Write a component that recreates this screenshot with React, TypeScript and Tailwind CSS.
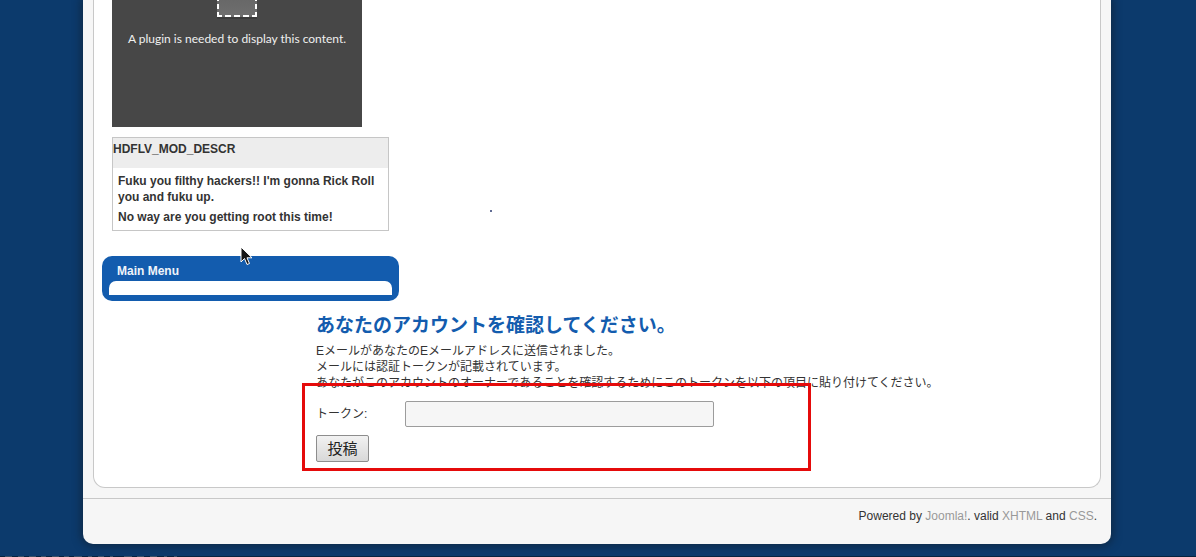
function PluginPlaceholder() {
  return (
    <div className="flex h-[127px] w-[250px] flex-col items-center overflow-hidden bg-[#474747]">
      <svg width="44" height="22" viewBox="0 0 44 22" aria-hidden="true">
        <defs>
          <linearGradient id="plug" x1="0" y1="0" x2="0" y2="1">
            <stop offset="0" stopColor="#686868" />
            <stop offset="1" stopColor="#6f6f6f" />
          </linearGradient>
        </defs>
        <rect x="2" y="0" width="40" height="19" fill="#3c3c3c" />
        <rect x="2" y="0" width="40" height="17" fill="url(#plug)" />
        <path
          d="M3 0V1M3 4V9M3 12V17M41 0V1M41 4V9M41 12V17M2 16H7M10 16H16M19 16H25M28 16H34M37 16H42"
          stroke="#fff"
          strokeWidth="2"
        />
      </svg>
      <p className="mt-2 font-['Lato',sans-serif] text-[12px] leading-[18px] text-[#f0f0f0]">
        A plugin is needed to display this content.
      </p>
    </div>
  );
}

function VideoDescription() {
  return (
    <section className="mt-[10px] w-[277px] border border-[#c6c6c6] pb-[5px] font-bold">
      <h3 className="h-[30px] bg-[#ededed] pt-[3px] leading-4">HDFLV_MOD_DESCR</h3>
      <p className="mt-[5px] px-[5px] leading-4">
        Fuku you filthy hackers!! I'm gonna Rick Roll you and fuku up.
      </p>
      <p className="mt-1 px-[5px] leading-4">No way are you getting root this time!</p>
    </section>
  );
}

function MainMenu() {
  return (
    <nav className="relative mt-[25px] w-[297px] rounded-[10px] bg-[#135cae] px-[7px] pt-[7px] pb-[6px]">
      <h3 className="px-2 leading-4 font-bold text-[#f0f4fa]">Main Menu</h3>
      <div className="mt-[2px] h-[14px] rounded-t-[7px] bg-white" />
      <svg
        className="absolute top-[-10px] left-[138px]"
        width="13"
        height="20"
        viewBox="0 0 13 20"
        aria-hidden="true"
      >
        <path d="M1 1V16L4.5 12.5L7 18.5L9.5 17.5L7 11.8H12Z" fill="#161616" stroke="#fff" />
      </svg>
    </nav>
  );
}

function ConfirmForm() {
  return (
    <form className="relative mt-[10px] w-full max-w-[398px]" onSubmit={(e) => e.preventDefault()}>
      <div className="flex items-center">
        <label htmlFor="token" className="w-[89px] shrink-0">
          トークン:
        </label>
        <input
          id="token"
          type="text"
          className="h-[26px] min-w-0 flex-1 rounded-[2px] border border-[#9c9c9c] bg-[#f6f6f6] px-1"
        />
      </div>
      <button
        type="submit"
        className="mt-2 block h-[27px] w-[53px] rounded-[2px] border border-[#8d8d8d] bg-linear-to-b from-[#f2f2f2] to-[#d8d8d8] text-[15px] leading-[25px] text-[#222]"
      >
        投稿
      </button>
      <div className="pointer-events-none absolute -top-[18px] -right-[97px] -bottom-[9px] -left-[14px] border-[3px] border-[#e50b0b]" />
    </form>
  );
}

export default function App() {
  return (
    <div className="bg-[#0c3a6c] pr-[85px] pl-[83px] font-['Liberation_Sans','Noto_Sans_CJK_JP',sans-serif] text-[12px] leading-4 text-[#333]">
      <div className="rounded-b-[10px] bg-[#f6f6f6] shadow-[0_0_8px_2px_rgba(16,34,52,0.7)]">
        <div className="px-[10px]">
          <main className="relative rounded-b-[12px] border border-t-0 border-[#c8c8c8] bg-white px-2 pb-[25px]">
            <div className="pl-[10px]">
              <PluginPlaceholder />
              <VideoDescription />
            </div>
            <MainMenu />
            <article className="mt-[13px] pl-[214px]">
              <h2 className="text-[19px] leading-6 font-bold text-[#135cae]">
                あなたのアカウントを確認してください。
              </h2>
              <p className="mt-[5px]">
                EメールがあなたのEメールアドレスに送信されました。
                <br />
                メールには認証トークンが記載されています。
                <br />
                あなたがこのアカウントのオーナーであることを確認するためにこのトークンを以下の項目に貼り付けてください。
              </p>
              <ConfirmForm />
            </article>
            <span className="absolute top-[210px] left-[396px] size-[2px] rounded-full bg-[#2d3b70]" />
          </main>
        </div>
        <footer className="mt-[10px] h-[46px] border-t border-[#c8c8c8] pt-[9px] pr-[14px] text-right">
          Powered by{" "}
          <a href="#joomla" className="text-[#999]">
            Joomla!
          </a>
          . valid{" "}
          <a href="#xhtml" className="text-[#999]">
            XHTML
          </a>{" "}
          and{" "}
          <a href="#css" className="text-[#999]">
            CSS
          </a>
          .
        </footer>
      </div>
      <div className="-mr-[85px] -ml-[83px] pt-3">
        <div className="h-px bg-[#06233f]">
          <svg width="180" height="1" className="block" aria-hidden="true">
            <path
              d="M5 .5h7M18 .5h6M29 .5h7M41 .5h5M52 .5h7M64 .5h5M74 .5h8M88 .5h4M98 .5h6M110 .5h3M124 .5h8M137 .5h7M150 .5h7M164 .5h3M174 .5h3"
              stroke="#3c5268"
            />
          </svg>
        </div>
      </div>
    </div>
  );
}
